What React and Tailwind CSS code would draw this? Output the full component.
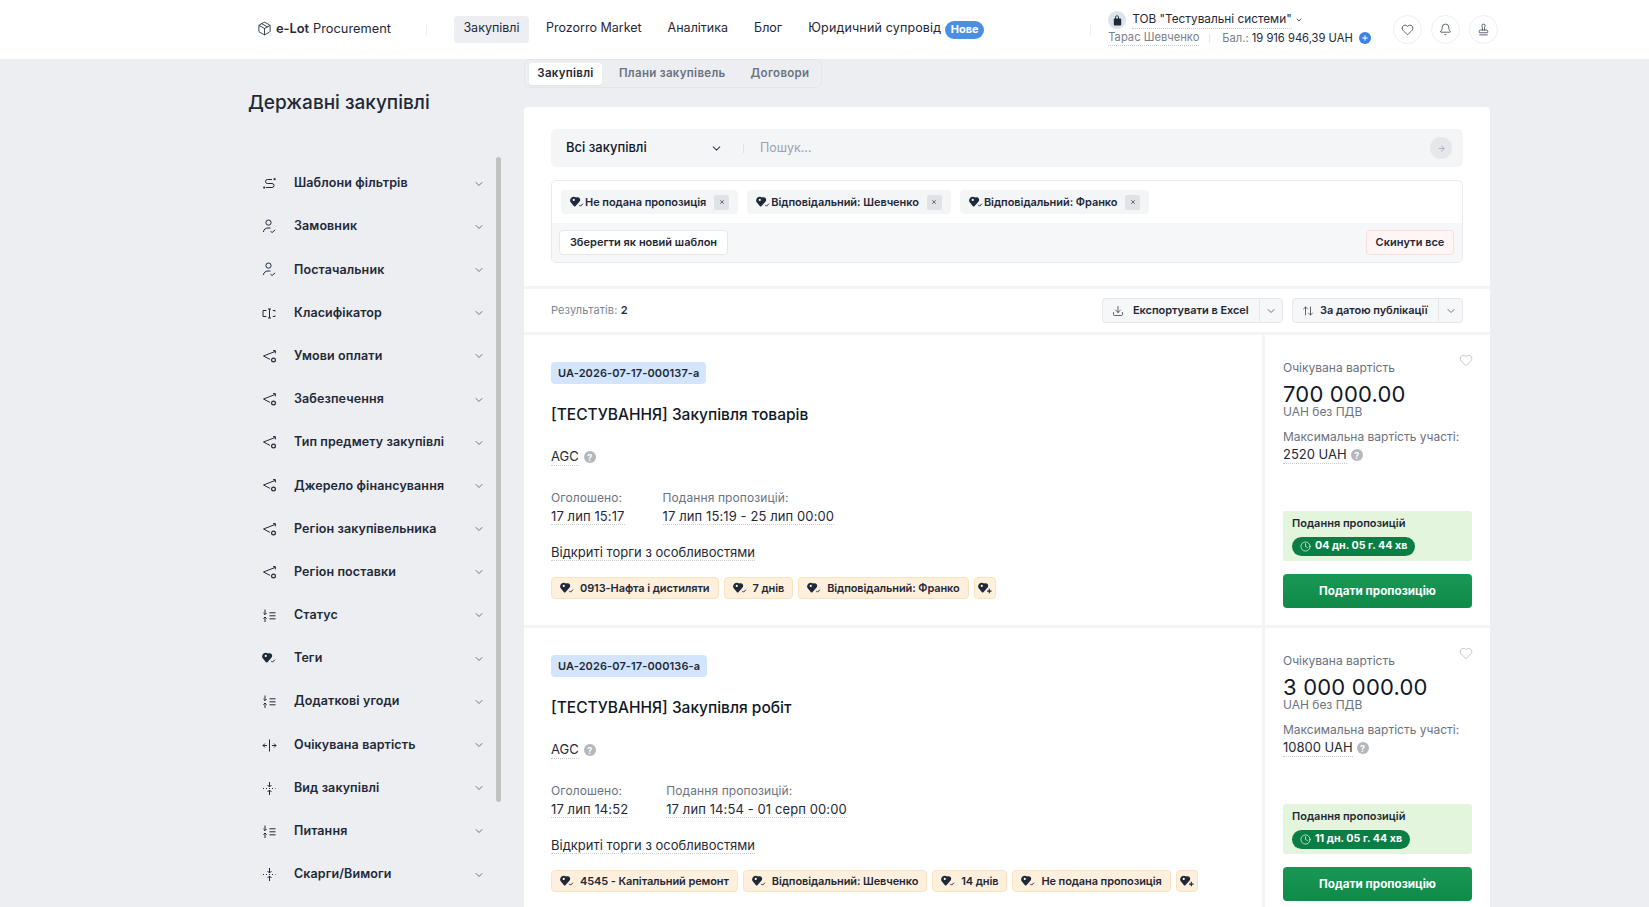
import { Heart, Bell, Stamp, ChevronDown, ArrowRight, Download, ArrowUpDown, Clock, X, Plus, Package } from 'lucide-react'

const FILTERS = [
  ['route', 'Шаблони фільтрів'],
  ['user', 'Замовник'],
  ['user', 'Постачальник'],
  ['class', 'Класифікатор'],
  ['send', 'Умови оплати'],
  ['send', 'Забезпечення'],
  ['send', 'Тип предмету закупівлі'],
  ['send', 'Джерело фінансування'],
  ['send', 'Регіон закупівельника'],
  ['send', 'Регіон поставки'],
  ['list', 'Статус'],
  ['tag', 'Теги'],
  ['list', 'Додаткові угоди'],
  ['split', 'Очікувана вартість'],
  ['merge', 'Вид закупівлі'],
  ['list', 'Питання'],
  ['merge', 'Скарги/Вимоги'],
]

const TENDERS = [
  {
    code: 'UA-2026-07-17-000137-a',
    title: '[ТЕСТУВАННЯ] Закупівля товарів',
    announced: '17 лип 15:17',
    period: '17 лип 15:19 - 25 лип 00:00',
    tags: ['0913-Нафта і дистиляти', '7 днів', 'Відповідальний: Франко'],
    price: '700 000.00',
    max: '2520 UAH',
    left: '04 дн. 05 г. 44 хв',
  },
  {
    code: 'UA-2026-07-17-000136-a',
    title: '[ТЕСТУВАННЯ] Закупівля робіт',
    announced: '17 лип 14:52',
    period: '17 лип 14:54 - 01 серп 00:00',
    tags: ['4545 - Капітальний ремонт', 'Відповідальний: Шевченко', '14 днів', 'Не подана пропозиція'],
    price: '3 000 000.00',
    max: '10800 UAH',
    left: '11 дн. 05 г. 44 хв',
  },
]

function TagIcon({ plus }) {
  return (
    <svg width="14" height="13" viewBox="0 0 13 12" className="shrink-0">
      <path d="M1.2 1.5C2.6.2 4.6.4 5.6 1.4c1.2-.7 2.7-.4 3.4.6.8 1.2.5 2.6-.5 3.5L5 9.4c-.4.4-.9.4-1.3 0L1 6.3C-.3 5-.2 2.8 1.2 1.5z" fill="#1f2937" />
      <circle cx="3.5" cy="3.6" r="1" fill="#fff" />
      {plus
        ? <path d="M8.4 8.4h4.2M10.5 6.3v4.2" stroke="#1f2937" strokeWidth="1.1" fill="none" />
        : <path d="M8.6 8.2l1.2 1.2 2.2-2.3" stroke="#1f2937" strokeWidth="0.9" fill="none" />}
    </svg>
  )
}

function FilterIcon({ type }) {
  const c = { stroke: '#1f2937', strokeWidth: 1, fill: 'none' }
  if (type === 'tag') return <TagIcon />
  let body
  if (type === 'route') body = (
    <>
      <path d="M4 11.5h6a2 2 0 0 0 0-4H5.5a2 2 0 0 1 0-4H10" {...c} />
      <circle cx="12.6" cy="3.2" r="1.1" fill="#1f2937" />
      <circle cx="2.2" cy="11.6" r="1.1" fill="#1f2937" />
    </>
  )
  if (type === 'user') body = (
    <>
      <circle cx="6.5" cy="3.6" r="2.6" {...c} />
      <path d="M1.5 13c0-2.4 2-4 4.5-4h2.5" {...c} />
      <path d="M8.5 12.2l1.6 1.3 3-2.6" {...c} />
    </>
  )
  if (type === 'class') body = (
    <>
      <path d="M4.5 4.5H1v6h3.5M10.8 4.5H13v1M13 9.5v1h-2.2" {...c} />
      <path d="M6 3h3M7.5 3v9M6 12h3" {...c} />
    </>
  )
  if (type === 'send') body = (
    <>
      <path d="M13 2.5L1.5 7l6.5 3.4" {...c} />
      <path d="M11 1.6h2.4v2.8" {...c} />
      <circle cx="11.5" cy="11" r="1.9" {...c} strokeWidth="1.2" />
    </>
  )
  if (type === 'list') body = (
    <>
      <path d="M3 1.5v5M1.4 5l1.6 1.6L4.6 5M3 14V9M1.4 10.6L3 9l1.6 1.6" {...c} />
      <path d="M7.5 4.8h6M7.5 7.8h6M7.5 10.8h6" {...c} />
    </>
  )
  if (type === 'split') body = (
    <>
      <path d="M7.5 1.5v12" {...c} />
      <path d="M5 7.5H1M3 5.5l-2 2 2 2M10 7.5h4M12 5.5l2 2-2 2" {...c} />
    </>
  )
  if (type === 'merge') body = (
    <>
      <path d="M7.5 1v5M5.5 4l2 2 2-2M7.5 14V9M5.5 11l2-2 2 2" {...c} />
      <path d="M1 7.5h12.5" {...c} strokeDasharray="1 2" />
    </>
  )
  return <svg width="15" height="15" viewBox="0 0 15 15" className="shrink-0">{body}</svg>
}

function Hint() {
  return <span className="inline-flex h-3 w-3 items-center justify-center rounded-full bg-[#b4b7bd] text-[9px] font-bold leading-none text-white">?</span>
}

function Dotted({ children }) {
  return <span className="border-b border-dotted border-[#c9cdd3] leading-[17px]">{children}</span>
}

function FilterChip({ label }) {
  return (
    <div className="flex h-6 items-center rounded-[4px] bg-[#f4f5f7] px-[9px]">
      <TagIcon />
      <span className="ml-[1px] whitespace-nowrap text-[11px] font-semibold tracking-[-0.05px] text-[#1f2937]">{label}</span>
      <span className="ml-[8px] flex h-[15px] w-[15px] items-center justify-center rounded-[2px] bg-[#e0e2e5]">
        <X size={6} strokeWidth={3} className="text-[#374151]" />
      </span>
    </div>
  )
}

function TenderTag({ children }) {
  return (
    <div className="flex h-[22px] items-center gap-[6px] whitespace-nowrap rounded-[4px] border border-[#fde3bd] bg-[#fff0de] px-2 text-[11px] font-semibold tracking-[-0.1px] text-[#1f2937]">
      <TagIcon />
      {children}
    </div>
  )
}

function Tender({ t }) {
  return (
    <div className="box-content flex h-[290px] border-b-[3px] border-[#f3f4f6]">
      <div className="w-[741px] border-r-[3px] border-[#f3f4f6] pl-[27px] pt-[27px]">
        <div className="flex h-[22px] w-fit items-center rounded-[4px] bg-[#d2e5fd] px-[7px] text-[11px] font-semibold tracking-[0.1px] text-[#1f2937]">{t.code}</div>
        <div className="mt-[19px] h-6 text-[15.5px] font-medium leading-6 text-[#111827]">{t.title}</div>
        <div className="mt-[20px] flex h-5 items-center gap-[5px] text-[13px] text-[#1f2937]">
          <Dotted>AGC</Dotted>
          <Hint />
        </div>
        <div className="mt-[23px] flex gap-[38px]">
          <div>
            <div className="h-4 text-[12px] leading-4 tracking-[0.1px] text-[#6b7280]">Оголошено:</div>
            <div className="mt-px h-[18px] text-[13px] tracking-[0.1px] text-[#1f2937]"><Dotted>{t.announced}</Dotted></div>
          </div>
          <div>
            <div className="h-4 text-[12px] leading-4 tracking-[0.1px] text-[#6b7280]">Подання пропозицій:</div>
            <div className="mt-px h-[18px] text-[13px] tracking-[0.1px] text-[#1f2937]"><Dotted>{t.period}</Dotted></div>
          </div>
        </div>
        <div className="mt-[17px] h-5 text-[13px] leading-5 text-[#1f2937]"><Dotted>Відкриті торги з особливостями</Dotted></div>
        <div className="mt-[15px] flex gap-[5px]">
          {t.tags.map(tag => <TenderTag key={tag}>{tag}</TenderTag>)}
          <div className="flex h-[22px] w-[22px] items-center justify-center rounded-[4px] border border-[#fde3bd] bg-[#fff0de]"><TagIcon plus /></div>
        </div>
      </div>
      <div className="relative flex w-[225px] flex-col px-[18px] pb-[17px] pt-[25px]">
        <Heart size={14} strokeWidth={1} className="absolute right-[17px] top-[18px] text-[#9ca3af]" />
        <div className="h-4 text-[12px] leading-4 text-[#6b7280]">Очікувана вартість</div>
        <div className="mt-[7px] h-[23px] text-[22px] leading-[23px] tracking-[0.2px] text-[#111827]">{t.price}</div>
        <div className="h-[11px] text-[12px] leading-[11px] text-[#6b7280]">UAH без ПДВ</div>
        <div className="mt-[12px] h-4 text-[12px] leading-4 text-[#6b7280]">Максимальна вартість участі:</div>
        <div className="mt-px flex h-[18px] items-center gap-[4px] text-[13px] text-[#1f2937]">
          <Dotted>{t.max}</Dotted>
          <Hint />
        </div>
        <div className="mt-auto h-[50px] rounded-[3px] bg-[#e3f6dd] px-[9px] pt-[4px]">
          <div className="h-4 text-[11px] font-semibold leading-4 text-[#1f2937]">Подання пропозицій</div>
          <div className="mt-[6px] flex h-[19px] w-fit items-center gap-[4px] rounded-full bg-[#0a7e45] px-[8px] text-[10.7px] font-bold text-white">
            <Clock size={11} strokeWidth={1.5} />
            {t.left}
          </div>
        </div>
        <div className="mt-[13px] flex h-[34px] items-center justify-center rounded-[4px] bg-linear-to-b from-[#199854] to-[#0f8a49] pt-px text-[11.7px] font-bold text-white">Подати пропозицію</div>
      </div>
    </div>
  )
}

function SplitButton({ icon, label, w, main }) {
  return (
    <div className={`flex h-[25px] rounded-[4px] border border-[#e5e7eb] bg-[#f6f7f9] ${w}`}>
      <div className={`flex items-center whitespace-nowrap pl-[9px] text-[11px] font-semibold tracking-[-0.05px] text-[#1f2937] ${main}`}>
        {icon}
        {label}
      </div>
      <div className="flex flex-1 items-center justify-center border-l border-[#e5e7eb]">
        <ChevronDown size={12} className="text-[#6b7280]" />
      </div>
    </div>
  )
}

export default function App() {
  return (
    <div className="h-screen overflow-hidden bg-[#eceef2] font-['Inter',sans-serif]">
      <header className="flex h-[59px] items-center bg-white pl-[257px]">
        <div className="flex w-[169px] items-center gap-[4px] pb-[2px] text-[12.8px] text-[#1f2937]">
          <Package size={15} strokeWidth={1.4} />
          <span className="font-semibold">e-Lot</span>
          <span>Procurement</span>
        </div>
        <div className="h-[12px] w-px bg-[#eceef2]" />
        <nav className="ml-[27px] flex items-center whitespace-nowrap text-[12.5px] text-[#1f2937]">
          <div className="flex h-[27px] w-[75px] items-center justify-center rounded-[4px] bg-[#eceef2] pb-[2px]">Закупівлі</div>
          <div className="ml-[17px] pb-[2px]">Prozorro Market</div>
          <div className="ml-[26px] pb-[2px]">Аналітика</div>
          <div className="ml-[26px] pb-[2px]">Блог</div>
          <div className="ml-[26px] pb-[2px] tracking-[0.15px]">Юридичний супровід</div>
          <div className="ml-[4px] flex h-[18px] w-[39px] items-center justify-center rounded-full bg-[#4a90e2] text-[11px] font-bold text-white">Нове</div>
        </nav>
        <div className="ml-[106px] h-[12px] w-px bg-[#eceef2]" />
        <div className="ml-[17px] w-[285px] whitespace-nowrap">
          <div className="flex h-[20px] items-center">
            <span className="flex h-[18px] w-[18px] items-center justify-center rounded-full bg-[#dde3ea]">
              <svg width="9" height="11" viewBox="0 0 9 11">
                <path d="M2.5 4V2.2C2.5 1.3 3.2.8 4 .8s1.5.5 1.5 1.4V4" stroke="#1f2937" fill="none" />
                <rect x="0.8" y="3.6" width="7.4" height="6.8" rx="1" fill="#1f2937" />
              </svg>
            </span>
            <span className="ml-[6px] border-b border-dotted border-[#c9cdd3] text-[11.8px] leading-[17px] text-[#1f2937]">ТОВ "Тестувальні системи"</span>
            <ChevronDown size={8} strokeWidth={3} className="ml-[3px] text-[#4b5563]" />
          </div>
          <div className="mb-[2px] mt-[-1px] flex h-[18px] items-center text-[11.2px]">
            <span className="border-b border-dotted border-[#c9cdd3] leading-[15px] text-[#7b818a]">Тарас Шевченко</span>
            <span className="ml-[10px] h-[9px] w-px bg-[#e5e7eb]" />
            <span className="ml-[12px] text-[#7b818a]">Бал.:</span>
            <span className="ml-[3px] text-[#1f2937]">19 916 946,39 UAH</span>
            <span className="ml-[6px] flex h-3 w-3 items-center justify-center rounded-full bg-[#3b82e6]"><Plus size={8} strokeWidth={3} className="text-white" /></span>
          </div>
        </div>
        <div className="flex gap-[9px] text-[#1f2937]">
          <span className="flex h-[29px] w-[29px] items-center justify-center rounded-full border border-[#eceef2]"><Heart size={13} strokeWidth={1.3} /></span>
          <span className="flex h-[29px] w-[29px] items-center justify-center rounded-full border border-[#eceef2]"><Bell size={13} strokeWidth={1.3} /></span>
          <span className="flex h-[29px] w-[29px] items-center justify-center rounded-full border border-[#eceef2]"><Stamp size={13} strokeWidth={1.3} /></span>
        </div>
      </header>

      <div className="flex pl-[248px]">
        <aside className="w-[276px] shrink-0">
          <h2 className="mt-[30px] h-7 text-[19px] font-medium leading-7 text-[#1f2937]">Державні закупівлі</h2>
          <div className="mt-[40px] flex">
            <ul className="mt-[5px] w-[248px]">
              {FILTERS.map(([icon, label]) => (
                <li key={label} className="flex h-[43.2px] items-center text-[12.5px] font-semibold tracking-[0.1px] text-[#1f2937]">
                  <span className="flex w-[46px] pl-[14px]"><FilterIcon type={icon} /></span>
                  <span className="flex-1">{label}</span>
                  <ChevronDown size={12} className="mr-[11px] text-[#6b7280]" />
                </li>
              ))}
            </ul>
            <div className="h-[645px] w-[5px] rounded-[3px] bg-[#c1c1c1]" />
          </div>
        </aside>

        <main className="w-[966px] shrink-0">
          <div className="flex h-[29px] w-fit items-center rounded-[6px] border border-[#e3e5e9] px-[4px] pt-px text-[11.5px] font-semibold tracking-[0.3px]">
            <div className="flex h-[22px] w-[73px] items-center justify-center rounded-[3px] bg-white text-[#1f2937] shadow-[0_1px_2px_rgba(0,0,0,0.06)]">Закупівлі</div>
            <div className="ml-[17px] text-[#6b7280]">Плани закупівель</div>
            <div className="ml-[25px] mr-[8px] text-[#6b7280]">Договори</div>
          </div>

          <div className="mt-[19px] rounded-t-[4px] bg-white">
            <div className="px-[27px] pb-[23px] pt-[22px]">
              <div className="flex h-[38px] items-center rounded-[5px] bg-[#f4f5f7] pl-[15px] pr-[11px]">
                <span className="w-[144px] text-[13px] font-medium text-[#111827]">Всі закупівлі</span>
                <ChevronDown size={13} className="text-[#374151]" />
                <span className="ml-[20px] h-[9px] w-px bg-[#e0e2e5]" />
                <span className="ml-[16px] flex-1 text-[12.5px] text-[#9ca3af]">Пошук...</span>
                <span className="flex h-[22px] w-[22px] items-center justify-center rounded-full bg-[#e5e7eb]"><ArrowRight size={9} className="text-[#9ca3af]" /></span>
              </div>
              <div className="mt-[13px] h-[83px] overflow-hidden rounded-[5px] border border-[#e8eaed]">
                <div className="flex h-[42px] items-center gap-[9px] pl-[9px]">
                  <FilterChip label="Не подана пропозиція" />
                  <FilterChip label="Відповідальний: Шевченко" />
                  <FilterChip label="Відповідальний: Франко" />
                </div>
                <div className="flex h-[39px] items-center justify-between bg-[#f6f7f9] pl-[7px] pr-[8px]">
                  <div className="flex h-[25px] w-[169px] items-center justify-center rounded-[4px] border border-[#e5e7eb] bg-white text-[11px] font-semibold text-[#1f2937]">Зберегти як новий шаблон</div>
                  <div className="flex h-[25px] w-[88px] items-center justify-center rounded-[4px] border border-[#fddcdc] bg-[#fff5f5] text-[11px] font-semibold text-[#1f2937]">Скинути все</div>
                </div>
              </div>
            </div>

            <div className="flex h-[49px] items-center border-y-[3px] border-[#f3f4f6] px-[27px]">
              <div className="flex-1 text-[11px] tracking-[0.1px] text-[#7b8794]">Результатів: <span className="font-semibold text-[#1f2937]">2</span></div>
              <SplitButton w="w-[181px]" main="w-[156px] gap-[9px]" label="Експортувати в Excel" icon={<Download size={12} strokeWidth={1.4} />} />
              <div className="w-[9px]" />
              <SplitButton w="w-[171px]" main="w-[145px] gap-[6px]" label="За датою публікації" icon={<ArrowUpDown size={12} strokeWidth={1.4} />} />
            </div>

            {TENDERS.map(t => <Tender key={t.code} t={t} />)}
          </div>
        </main>
      </div>
    </div>
  )
}
